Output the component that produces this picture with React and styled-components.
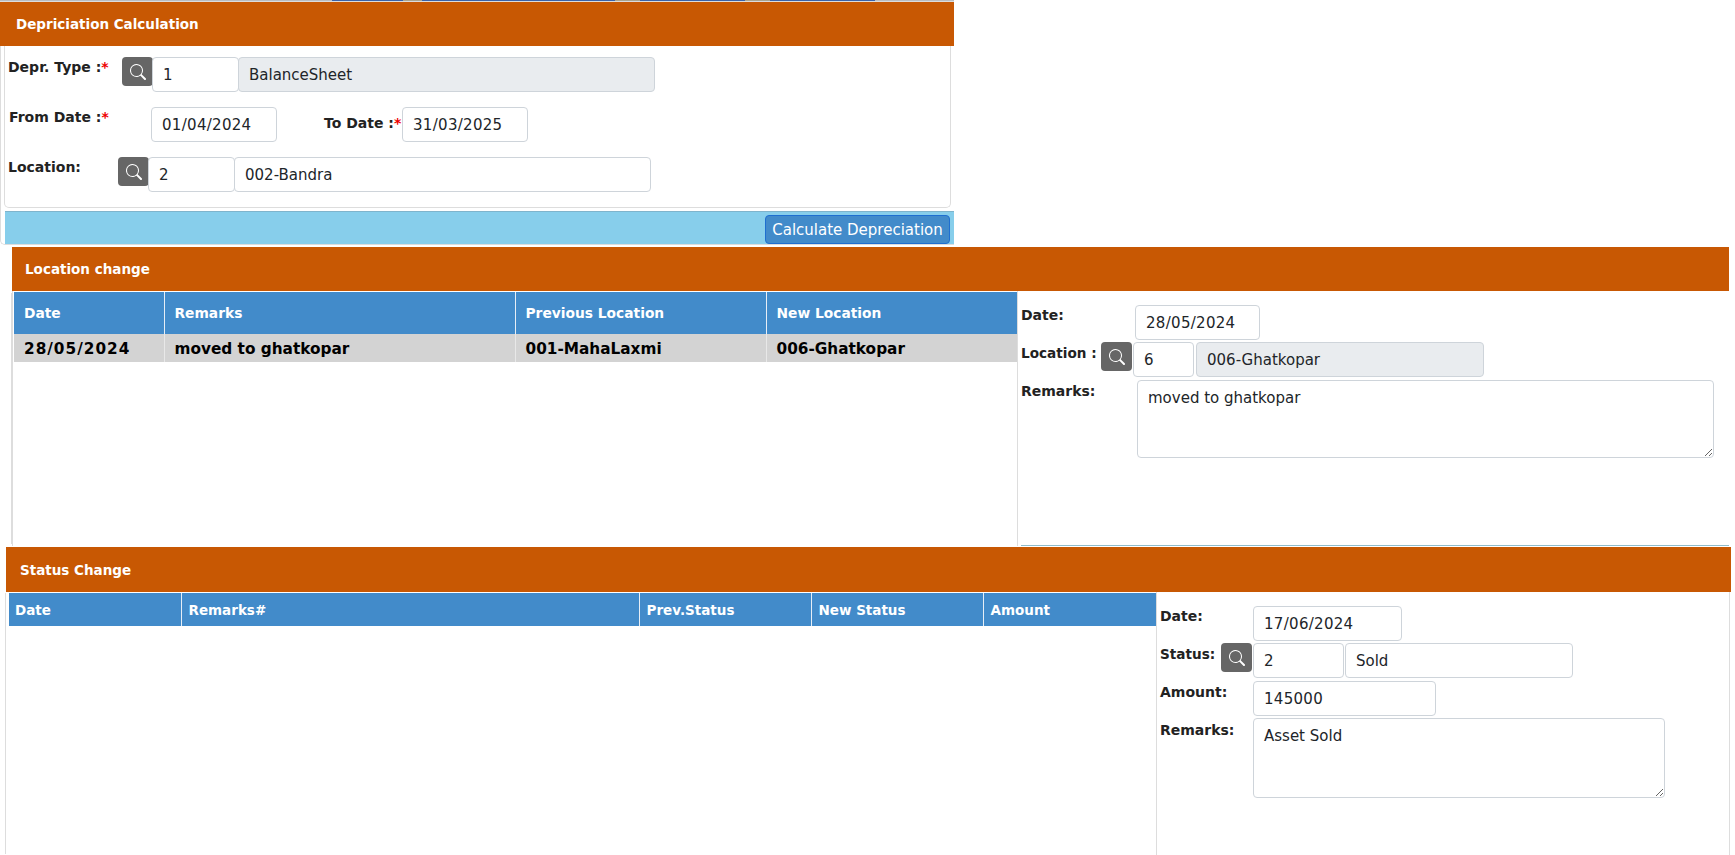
import styled, { createGlobalStyle } from "styled-components";
import { BsSearch } from "react-icons/bs";

const GlobalStyle = createGlobalStyle`
    html, body {
        margin: 0;
        padding: 0;
        height: 855px;
        overflow: hidden;
        background: #fff;
        font-family: "DejaVu Sans", Verdana, sans-serif;
        color: #212529;
    }
    * {
        box-sizing: border-box;
    }
`;

const TopStrip = styled.div`
    display: flex;
    width: 954px;
    height: 2px;
    border-bottom: 1px solid #ddd;
`;

const StripPiece = styled.span`
    width: ${(p) => p.$width}px;
    background: ${(p) => p.$color};
`;

const DeprPanel = styled.section`
    width: 954px;
    height: 245px;
`;

const PanelHeader = styled.header`
    height: ${(p) => p.$height || 44}px;
    background: #c85803;
    color: #fff;
    font-size: 13.5px;
    font-weight: bold;
    padding-left: ${(p) => p.$indent}px;
    display: flex;
    align-items: center;
`;

const DeprBody = styled.div`
    height: 199px;
    border-left: 1px solid #ddd;
    border-bottom: 1px solid #ddd;
    border-bottom-left-radius: 5px;
    padding-left: 3px;
`;

const FormCard = styled.div`
    width: 947px;
    height: 162px;
    border: 1px solid #ddd;
    border-top: 0;
    border-radius: 0 0 5px 5px;
    padding: 11px 0 0 3px;
    display: flex;
    flex-direction: column;
    gap: 15px;
`;

const ActionBar = styled.div`
    height: 33px;
    width: 949px;
    margin-top: 3px;
    margin-left: 1px;
    background: #87ceeb;
    border-top: 1px solid #7fb4cc;
    display: flex;
    justify-content: flex-end;
    align-items: flex-start;
    padding: 3px 4px 0 0;
`;

const CalcButton = styled.button`
    width: 185px;
    height: 29px;
    background: #428bca;
    border: 1px solid #1f6fd0;
    border-radius: 4px;
    color: #fff;
    font-family: inherit;
    font-size: 15px;
    padding: 0;
`;

const Row = styled.div`
    display: flex;
    align-items: flex-start;
    height: 35px;
    margin-top: ${(p) => p.$shift || 0}px;
`;

const Label = styled.label`
    flex: none;
    width: ${(p) => p.$width}px;
    font-size: ${(p) => p.$size || 14}px;
    font-weight: bold;
    line-height: 20px;
    color: #222;
    margin-top: ${(p) => p.$top || 0}px;
    margin-left: ${(p) => p.$left || 0}px;
    white-space: nowrap;
`;

const Required = styled.span`
    color: #e00;
`;

const SearchButton = styled.button`
    flex: none;
    width: ${(p) => p.$width || 31}px;
    height: 29px;
    background: #666;
    border: 0;
    border-radius: 4px;
    color: #fff;
    display: flex;
    align-items: center;
    justify-content: center;
    padding: 0;
    font-size: 16px;
`;

const Field = styled.input`
    flex: none;
    width: ${(p) => p.$width}px;
    height: 35px;
    border: 1px solid #ced4da;
    border-radius: 4px;
    padding: 0 10px;
    margin-left: ${(p) => p.$gap || 0}px;
    font-family: inherit;
    font-size: 15px;
    letter-spacing: ${(p) => (p.$digits ? "0.3px" : "normal")};
    color: #212529;
    background: #fff;
    &:disabled {
        background: #e9ecef;
        opacity: 1;
    }
`;

const TextArea = styled.textarea`
    display: block;
    flex: none;
    width: ${(p) => p.$width}px;
    height: ${(p) => p.$height}px;
    border: 1px solid #ced4da;
    border-radius: 4px;
    padding: 6px 10px;
    margin: 0;
    font-family: inherit;
    font-size: 15px;
    line-height: 22px;
    color: #212529;
`;

const LocationPanel = styled.section`
    width: 1717px;
    height: 300px;
    margin-left: 12px;
`;

const PaneSplit = styled.div`
    display: flex;
    height: ${(p) => p.$height}px;
`;

const LocationSplit = styled(PaneSplit)`
    border-left: 1px solid #ddd;
    box-shadow: -3px 0 0 -2px #ddd;
`;

const TablePane = styled.div`
    flex: none;
    width: ${(p) => p.$width}px;
    padding-left: ${(p) => p.$indent}px;
    padding-top: 1px;
`;

const FormPane = styled.div`
    flex: 1;
    border-left: 1px solid #ddd;
    padding: 14px 0 0 3px;
    display: flex;
    flex-direction: column;
    gap: 2px;
    position: relative;
`;

const TealLine = styled.div`
    position: absolute;
    left: 3px;
    right: 0;
    bottom: 0;
    height: 1px;
    background: #8fbccb;
`;

const GridTable = styled.table`
    width: 100%;
    table-layout: fixed;
    border-collapse: collapse;
    font-size: ${(p) => p.$size}px;
    color: #fff;
`;

const HeadCell = styled.th`
    width: ${(p) => p.$width}px;
    height: ${(p) => p.$height}px;
    background: #428bca;
    border-left: 1px solid #e6eef6;
    text-align: left;
    padding: 0 0 0 ${(p) => p.$pad || 10}px;
    &:first-child {
        border-left: 0;
    }
`;

const BodyCell = styled.td`
    height: 28px;
    background: #d3d3d3;
    border-left: 1px solid #e8e8e8;
    color: #000;
    font-size: 15.3px;
    font-weight: bold;
    letter-spacing: ${(p) => (p.$digits ? "1px" : "normal")};
    padding: 2px 0 0 10px;
    white-space: nowrap;
    &:first-child {
        border-left: 0;
    }
`;

const StatusPanel = styled.section`
    width: 1725px;
    margin-left: 6px;
`;

const StatusSplit = styled(PaneSplit)`
    box-shadow: -2px 0 0 -1px #ddd;
    border-right: 1px solid #ddd;
    width: 1724px;
`;

const stripPieces = [
    { width: 332, color: "#b9bdc1" },
    { width: 71, color: "#3a62a8" },
    { width: 19, color: "#a9a48f" },
    { width: 193, color: "#3a62a8" },
    { width: 25, color: "#a9a48f" },
    { width: 105, color: "#3a62a8" },
    { width: 25, color: "#a9a48f" },
    { width: 105, color: "#3a62a8" },
    { width: 79, color: "#b9bdc1" },
];

const App = () => {
    return (
        <>
            <GlobalStyle />
            <TopStrip>
                {stripPieces.map((piece, i) => (
                    <StripPiece key={i} $width={piece.width} $color={piece.color} />
                ))}
            </TopStrip>
            <DeprPanel>
                <PanelHeader $indent={16}>Depriciation Calculation</PanelHeader>
                <DeprBody>
                    <FormCard>
                        <Row>
                            <Label $width={114}>Depr. Type :<Required>*</Required></Label>
                            <SearchButton><BsSearch /></SearchButton>
                            <Field $width={87} $gap={-1} defaultValue="1" />
                            <Field $width={417} $gap={-1} defaultValue="BalanceSheet" disabled />
                        </Row>
                        <Row>
                            <Label $width={142} $left={1}>From Date :<Required>*</Required></Label>
                            <Field $width={126} $digits defaultValue="01/04/2024" />
                            <Label $width={78} $left={47} $top={6}>To Date :<Required>*</Required></Label>
                            <Field $width={126} $digits defaultValue="31/03/2025" />
                        </Row>
                        <Row>
                            <Label $width={110}>Location:</Label>
                            <SearchButton><BsSearch /></SearchButton>
                            <Field $width={87} $gap={-1} defaultValue="2" />
                            <Field $width={417} $gap={-1} defaultValue="002-Bandra" />
                        </Row>
                    </FormCard>
                    <ActionBar>
                        <CalcButton>Calculate Depreciation</CalcButton>
                    </ActionBar>
                </DeprBody>
            </DeprPanel>

            <LocationPanel>
                <PanelHeader $indent={13}>Location change</PanelHeader>
                <LocationSplit $height={255}>
                    <TablePane $width={1004} $indent={1}>
                        <GridTable $size={13.8}>
                            <thead>
                                <tr>
                                    <HeadCell $width={150} $height={42}>Date</HeadCell>
                                    <HeadCell $width={351} $height={42}>Remarks</HeadCell>
                                    <HeadCell $width={251} $height={42}>Previous Location</HeadCell>
                                    <HeadCell $width={251} $height={42}>New Location</HeadCell>
                                </tr>
                            </thead>
                            <tbody>
                                <tr>
                                    <BodyCell $digits>28/05/2024</BodyCell>
                                    <BodyCell>moved to ghatkopar</BodyCell>
                                    <BodyCell>001-MahaLaxmi</BodyCell>
                                    <BodyCell>006-Ghatkopar</BodyCell>
                                </tr>
                            </tbody>
                        </GridTable>
                    </TablePane>
                    <FormPane>
                        <Row>
                            <Label $width={114}>Date:</Label>
                            <Field $width={125} $digits defaultValue="28/05/2024" />
                        </Row>
                        <Row>
                            <Label $width={80} $top={1} $size={13.6}>Location :</Label>
                            <SearchButton><BsSearch /></SearchButton>
                            <Field $width={61} $gap={1} defaultValue="6" />
                            <Field $width={288} $gap={2} defaultValue="006-Ghatkopar" disabled />
                        </Row>
                        <Row $shift={1}>
                            <Label $width={116} $top={1}>Remarks:</Label>
                            <TextArea $width={577} $height={78} defaultValue="moved to ghatkopar" />
                        </Row>
                        <TealLine />
                    </FormPane>
                </LocationSplit>
            </LocationPanel>

            <StatusPanel>
                <PanelHeader $height={45} $indent={14}>Status Change</PanelHeader>
                <StatusSplit $height={263}>
                    <TablePane $width={1150} $indent={3}>
                        <GridTable $size={13.5}>
                            <thead>
                                <tr>
                                    <HeadCell $width={172} $height={33} $pad={6}>Date</HeadCell>
                                    <HeadCell $width={458} $height={33} $pad={7}>Remarks#</HeadCell>
                                    <HeadCell $width={172} $height={33} $pad={7}>Prev.Status</HeadCell>
                                    <HeadCell $width={172} $height={33} $pad={7}>New Status</HeadCell>
                                    <HeadCell $width={173} $height={33} $pad={7}>Amount</HeadCell>
                                </tr>
                            </thead>
                        </GridTable>
                    </TablePane>
                    <FormPane>
                        <Row>
                            <Label $width={93}>Date:</Label>
                            <Field $width={149} $digits defaultValue="17/06/2024" />
                        </Row>
                        <Row>
                            <Label $width={61} $top={1} $size={13.6}>Status:</Label>
                            <SearchButton><BsSearch /></SearchButton>
                            <Field $width={91} $gap={1} defaultValue="2" />
                            <Field $width={228} $gap={1} defaultValue="Sold" />
                        </Row>
                        <Row $shift={1}>
                            <Label $width={93} $top={1}>Amount:</Label>
                            <Field $width={183} $digits defaultValue="145000" />
                        </Row>
                        <Row>
                            <Label $width={93} $top={2}>Remarks:</Label>
                            <TextArea $width={412} $height={80} defaultValue="Asset Sold" />
                        </Row>
                    </FormPane>
                </StatusSplit>
            </StatusPanel>
        </>
    );
};

export default App;
